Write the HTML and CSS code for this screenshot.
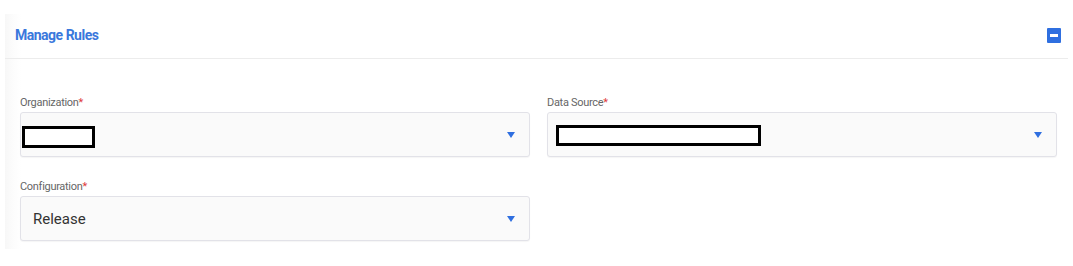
FILE: index.html
```html
<!DOCTYPE html>
<html lang="en">
<head>
    <meta charset="UTF-8">
    <meta name="viewport" content="width=device-width, initial-scale=1.0">
    <title>Manage Rules</title>
    <link rel="stylesheet" href="styles.css">
</head>
<body>

<div class="panel">
    <div class="panel-header">
        <h2 class="panel-title">Manage Rules</h2>
        <button class="collapse-btn" aria-label="Collapse"><span></span></button>
    </div>

    <div class="panel-body">
        <div class="field">
            <label>Organization<span class="req">*</span></label>
            <div class="select">
                <span class="redacted redacted-org"></span>
                <svg class="arrow" width="8" height="6" viewBox="0 0 8 6"><path d="M0 0H8L4 6Z" fill="#2f6fe0"/></svg>
            </div>
        </div>

        <div class="field">
            <label>Data Source<span class="req">*</span></label>
            <div class="select">
                <span class="redacted redacted-source"></span>
                <svg class="arrow" width="8" height="6" viewBox="0 0 8 6"><path d="M0 0H8L4 6Z" fill="#2f6fe0"/></svg>
            </div>
        </div>

        <div class="field">
            <label>Configuration<span class="req">*</span></label>
            <div class="select">
                <span class="value">Release</span>
                <svg class="arrow" width="8" height="6" viewBox="0 0 8 6"><path d="M0 0H8L4 6Z" fill="#2f6fe0"/></svg>
            </div>
        </div>
    </div>
</div>

</body>
</html>
```

FILE: styles.css
```css
body {
    font-family: Roboto, "Liberation Sans", Arial, sans-serif;
    background-color: white;
    margin: 0;
    padding: 14px 5px 0 5px;
}
.panel {
    background: linear-gradient(to right, #f7f7f7, #fcfcfc 8px, white 16px);
}
.panel-header {
    display: flex;
    align-items: center;
    justify-content: space-between;
    height: 44px;
    padding: 0 7px 0 10px;
    border-bottom: 1px solid #ececec;
}
.panel-title {
    margin: 0 0 2px 0;
    font-size: 14px;
    font-weight: 700;
    letter-spacing: -0.5px;
    color: #3a78dc;
}
.collapse-btn {
    display: flex;
    align-items: center;
    justify-content: center;
    width: 14px;
    height: 15px;
    padding: 0;
    margin-bottom: 2px;
    border: none;
    border-radius: 1px;
    background-color: #2f6fe0;
}
.collapse-btn span {
    width: 8px;
    height: 3px;
    background-color: white;
}
.panel-body {
    display: grid;
    grid-template-columns: 510px 510px;
    column-gap: 17px;
    row-gap: 22px;
    padding: 36px 11px 8px 15px;
}
.field label {
    display: block;
    height: 15px;
    margin-bottom: 2px;
    font-size: 11px;
    line-height: 15px;
    letter-spacing: -0.3px;
    color: #666;
}
.req {
    color: #e03b3b;
}
.select {
    display: flex;
    align-items: center;
    height: 43px;
    padding: 0 14px 0 12px;
    border: 1px solid #e2e2e8;
    border-radius: 3px;
    background-color: #fafafa;
    box-shadow: 0 1px 1px rgba(0, 0, 0, 0.04);
}
.value {
    font-size: 15px;
    color: #333;
}
.arrow {
    margin-left: auto;
}
.redacted {
    box-sizing: border-box;
    border: 3px solid black;
    background-color: white;
}
.redacted-org {
    width: 73px;
    height: 22px;
    margin: 5px 0 0 -11px;
}
.redacted-source {
    width: 205px;
    height: 21px;
    margin: 2px 0 0 -4px;
}
```
